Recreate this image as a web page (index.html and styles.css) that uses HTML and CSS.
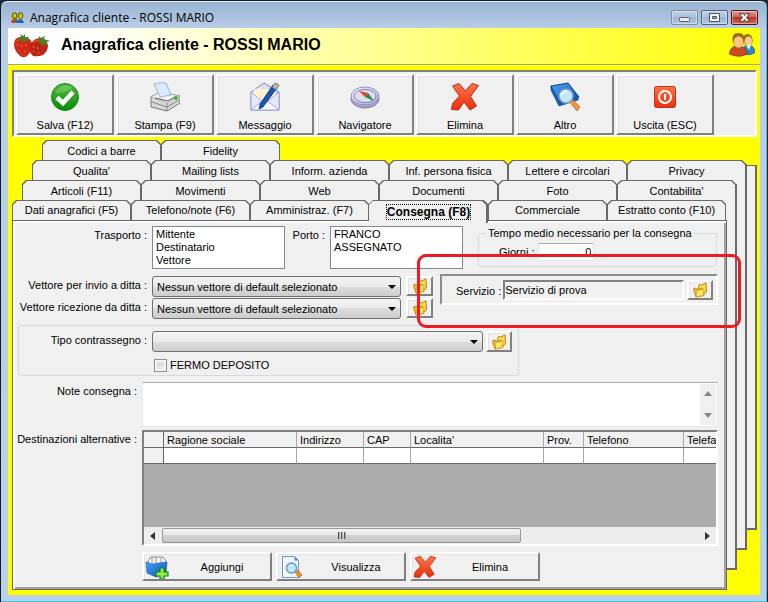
FILE: index.html
```html
<!DOCTYPE html>
<html lang="it">
<head>
    <meta charset="UTF-8">
    <meta name="viewport" content="width=device-width, initial-scale=1.0">
    <title>Anagrafica cliente - ROSSI MARIO</title>
    <link rel="stylesheet" href="styles.css">
</head>
<body>
    <!-- Shared icons -->
    <svg class="defs" aria-hidden="true">
        <defs>
            <linearGradient id="gRed" x1="0" y1="0" x2="0" y2="1"><stop offset="0" stop-color="#ff7448"/><stop offset="1" stop-color="#e8300c"/></linearGradient>
            <linearGradient id="gGreen" x1="0" y1="0" x2="0" y2="1"><stop offset="0" stop-color="#52bd3c"/><stop offset="1" stop-color="#078a08"/></linearGradient>
            <linearGradient id="gFolder" x1="0" y1="0" x2="1" y2="1"><stop offset="0" stop-color="#fffbb0"/><stop offset="1" stop-color="#f7d020"/></linearGradient>
            <linearGradient id="gLilac" x1="0" y1="0" x2="1" y2="1"><stop offset="0" stop-color="#f4f4ff"/><stop offset="1" stop-color="#a9abd8"/></linearGradient>
            <linearGradient id="gBlue" x1="0" y1="0" x2="1" y2="1"><stop offset="0" stop-color="#48a4f4"/><stop offset="1" stop-color="#0a4fae"/></linearGradient>
        </defs>
        <symbol id="icon-folder" viewBox="0 0 16 16">
            <path d="M6.500 4.500l1-2 2 .5 4.500-2 .5 9-2.500 2-5-1z" fill="#f7d84e" stroke="#b8860b"/>
            <path d="M1.500 7l2.500-1 1 1.500 5.500-1 1.500 7-8 1.500z" fill="#eec23a" stroke="#b8860b"/>
            <path d="M4.500 9l7.500-2-.5 6.500-7 1.500z" fill="url(#gFolder)" stroke="#cfa010" stroke-width=".7"/>
        </symbol>
        <symbol id="icon-delete" viewBox="0 0 30 30">
            <path d="M2.500 4l6.500-2.500 6.500 7.500L22 1.500l6.500 2-8 11 6 9.500-6.500 4-6-8-5.500 8-7-.5 1-6 7-7.500z" fill="url(#gRed)" stroke="#c42810"/>
        </symbol>
        <symbol id="icon-users" viewBox="0 0 26 24">
            <path d="M14 21c0-6 1-9 5-9s7 3 6.500 8q-5 3-11.500 1z" fill="#2d83d6" stroke="#18539c" stroke-width=".7"/>
            <path d="M17 12l3 5 2-5z" fill="#e8f6ff"/>
            <path d="M14.500 3q4-4 8 0 2 4 .5 8l-7 1z" fill="#9b7110"/>
            <ellipse cx="19.500" cy="8" rx="3.500" ry="4.500" fill="#fccb91"/>
            <path d="M.5 21C1 16 3 13 9 13s8.500 3 9 8q-8 4.500-17.500 0z" fill="#c94a1c" stroke="#8a2c0c" stroke-width=".7"/>
            <path d="M3.500 7Q3 0 9 0t6.500 5q0 4-1.500 7H5z" fill="#9b6b17"/>
            <ellipse cx="9.500" cy="9" rx="4.800" ry="5.800" fill="#fcc588"/>
        </symbol>
    </svg>

    <div class="window">
        <div class="titlebar">
            <svg class="title-icon" viewBox="0 0 13 12">
                <path d="M2 1h3l1 3-2 3-3-2zM8 1h3l1 3-2 4-3-3z" fill="#d9c400" stroke="#5c5400"/>
                <path d="M0 10q1-4 6-4v5H1z" fill="#e23418"/><path d="M5 11q0-4 4-3.500t4 3.500z" fill="#2465c8"/>
                <path d="M3 7h3v2H3z" fill="#2c9c28"/>
            </svg>
            <span class="title-text">Anagrafica cliente - ROSSI MARIO</span>
            <button class="win-btn" aria-label="Riduci"><svg viewBox="0 0 27 15"><rect x="8.500" y="7.500" width="10" height="4" rx="1" fill="#ebebeb" stroke="#5b5f68"/></svg></button>
            <button class="win-btn strong" aria-label="Ingrandisci"><svg viewBox="0 0 27 15"><path d="M8.500 3.500h10v8h-10zM11.500 6.500h4v2h-4z" fill="#f5f5f5" fill-rule="evenodd" stroke="#4b5260"/></svg></button>
            <button class="win-btn close" aria-label="Chiudi"><svg viewBox="0 0 27 15"><path d="M8.500 3.500h3.500l1.500 2 1.500-2h3.500l-3 4 3 4H15l-1.500-2-1.500 2H8.500l3-4z" fill="#f8f8f8" stroke="#54424a"/></svg></button>
        </div>

        <div class="header">
            <svg class="logo" viewBox="0 0 37 24">
                <path d="M1 10Q1 4 7 3q10-1 12 6 1 7-5 13-4 3-8-1-5-5-5-11z" fill="#cf2a16"/>
                <path d="M17 13q1-7 9-9 8 1 9 7 0 6-5 10-5 2-10 1-4-3-3-9z" fill="#bf2413"/>
                <path d="M20 9q3-3 6-3M3 8q2-3 5-3" fill="none" stroke="#ea5a3c"/>
                <path d="M5 4l3-1-1-3 3 2 2-2 0 3 4 0-2 2 2 2-4 0-2 2-1-3-4 1zM26 6l0-4 2 2 4-2-1 3 6 2-4 1 2 5-4-3-2 3-1-4-4-1z" fill="#517c28"/>
                <path d="M4 10l1 2m3-1l1 2m4-3l0 2m-7 4l1 1m4 0l1 1m-3 2l1 1m10-9l1 2m3-1l1 2m-5 2l1 1m5 0l-1 2" stroke="#f57c53"/>
            </svg>
            <h1>Anagrafica cliente - ROSSI MARIO</h1>
            <svg class="users"><use href="#icon-users"/></svg>
        </div>

        <div class="content">
            <div class="toolbar">
                <button class="tool">
                    <svg viewBox="0 0 30 30"><circle cx="15" cy="15" r="13.500" fill="url(#gGreen)" stroke="#16861a"/><path d="M6 9Q12 1 22 5q-4 6-16 6z" fill="#fff" opacity=".2"/><path d="M7 15.500l6 5.500L23 10" fill="none" stroke="#fff" stroke-width="4.500"/></svg>
                    Salva (F12)
                </button>
                <button class="tool">
                    <svg viewBox="0 0 30 30"><path d="M1 15l9-5 20 4v7l-13 8L1 25z" fill="#d7d7d7" stroke="#777"/><path d="M1 15l9-5 20 4-13 7z" fill="#f3f3f3" stroke="#999" stroke-width=".6"/><path d="M4 2q7-2 12-1l5 12-11 2z" fill="#d8ebff" stroke="#7f9dc0" stroke-width=".7"/><path d="M17 21v8M2 20l15 5 12-7" fill="none" stroke="#888"/><path d="M5 16l13 3 7-4" fill="none" stroke="#555"/><circle cx="26" cy="16" r="2" fill="#35b334"/></svg>
                    Stampa (F9)
                </button>
                <button class="tool">
                    <svg viewBox="0 0 30 30"><path d="M1 10L14 1l15 9v18H1z" fill="url(#gLilac)" stroke="#8588bd"/><path d="M4 7h22v12l-11 6-11-7z" fill="#fff0cf"/><path d="M1 10l12 10L1 28zM29 10L17 20l12 8z" fill="#e7e8fb" stroke="#9092c8" stroke-width=".7"/><path d="M1 28l14-11 14 11z" fill="#f5f5ff" stroke="#9092c8" stroke-width=".7"/><path d="M23 3l4 3-14 19-4 2 1-5z" fill="#1756b5" stroke="#0b2d6d" stroke-width=".7"/><path d="M25 1l4 2-3 5-4-3z" fill="#bcbcae" stroke="#555" stroke-width=".7"/></svg>
                    Messaggio
                </button>
                <button class="tool">
                    <svg viewBox="0 0 30 30"><ellipse cx="15" cy="17" rx="14" ry="9" fill="#a3a5d0" stroke="#7c7eac"/><ellipse cx="15" cy="14" rx="14" ry="9" fill="url(#gLilac)" stroke="#8f91c0"/><ellipse cx="15" cy="14" rx="11" ry="6.500" fill="#dcddef" stroke="#8082ac"/><path d="M9 9l9 2-3 4z" fill="#e6402a"/><path d="M18 11l6 8-9-4z" fill="#1f8c3c"/></svg>
                    Navigatore
                </button>
                <button class="tool">
                    <svg><use href="#icon-delete"/></svg>
                    Elimina
                </button>
                <button class="tool">
                    <svg viewBox="0 0 30 30"><path d="M1 4l17-3 11 14-19 8z" fill="url(#gBlue)" stroke="#0b3f8c"/><path d="M1 4v4l8 16 19-6v-3L10 21z" fill="#1565c6" stroke="#0b3f8c" stroke-width=".7"/><path d="M20 20l3-2 7 7-3 4z" fill="#f59a35" stroke="#b3622b" stroke-width=".8"/><circle cx="16" cy="14" r="7" fill="#c4e8fb" stroke="#7f9db5" stroke-width="1.500"/><path d="M11 13q2-4 6-4" stroke="#fff" stroke-width="2" fill="none"/></svg>
                    Altro
                </button>
                <button class="tool">
                    <svg viewBox="0 0 30 30"><rect x="4.500" y="4.500" width="21" height="21" rx="2" fill="url(#gRed)" stroke="#bf3514"/><circle cx="15" cy="15" r="6" fill="none" stroke="#fff" stroke-width="2"/><path d="M15 12v6" stroke="#fff" stroke-width="2"/></svg>
                    Uscita (ESC)
                </button>
            </div>

            <div class="tabs">
                <div class="sheet sheet-4"></div>
                <div class="sheet sheet-3"></div>
                <div class="sheet sheet-2"></div>

                <div class="tab-row row-1">
                    <button class="tab">Codici a barre</button>
                    <button class="tab">Fidelity</button>
                </div>
                <div class="tab-row row-2">
                    <button class="tab">Qualita'</button>
                    <button class="tab">Mailing lists</button>
                    <button class="tab">Inform. azienda</button>
                    <button class="tab">Inf. persona fisica</button>
                    <button class="tab">Lettere e circolari</button>
                    <button class="tab">Privacy</button>
                </div>
                <div class="tab-row row-3">
                    <button class="tab">Articoli (F11)</button>
                    <button class="tab">Movimenti</button>
                    <button class="tab">Web</button>
                    <button class="tab">Documenti</button>
                    <button class="tab">Foto</button>
                    <button class="tab">Contabilita'</button>
                </div>
                <div class="tab-row row-4">
                    <button class="tab">Dati anagrafici (F5)</button>
                    <button class="tab">Telefono/note (F6)</button>
                    <button class="tab">Amministraz. (F7)</button>
                    <button class="tab active"><span>Consegna (F8)</span></button>
                    <button class="tab">Commerciale</button>
                    <button class="tab">Estratto conto (F10)</button>
                </div>

                <div class="panel">
                    <div class="line">
                        <label class="field-label" for="trasporto">Trasporto :</label>
                        <select class="listbox" id="trasporto" size="3" multiple>
                            <option>Mittente</option>
                            <option>Destinatario</option>
                            <option>Vettore</option>
                        </select>
                        <label class="porto-label" for="porto">Porto :</label>
                        <select class="listbox" id="porto" size="3" multiple>
                            <option>FRANCO</option>
                            <option>ASSEGNATO</option>
                        </select>
                        <fieldset class="tempo">
                            <legend>Tempo medio necessario per la consegna</legend>
                            <label for="giorni">Giorni :</label>
                            <input type="text" id="giorni" value="0">
                        </fieldset>
                    </div>

                    <div class="line line-vettori">
                        <div class="vettori">
                            <div class="line">
                                <label class="field-label" for="invio">Vettore per invio a ditta :</label>
                                <div class="combo">
                                    <select id="invio"><option>Nessun vettore di default selezionato</option></select>
                                </div>
                                <button class="folder-btn" aria-label="Apri vettore invio"><svg><use href="#icon-folder"/></svg></button>
                            </div>
                            <div class="line">
                                <label class="field-label" for="ricezione">Vettore ricezione da ditta :</label>
                                <div class="combo">
                                    <select id="ricezione"><option>Nessun vettore di default selezionato</option></select>
                                </div>
                                <button class="folder-btn" aria-label="Apri vettore ricezione"><svg><use href="#icon-folder"/></svg></button>
                            </div>
                        </div>
                        <div class="servizio">
                            <label for="servizio">Servizio :</label>
                            <input type="text" id="servizio" value="Servizio di prova" readonly>
                            <button class="folder-btn" aria-label="Apri servizio"><svg><use href="#icon-folder"/></svg></button>
                            <div class="highlight"></div>
                        </div>
                    </div>

                    <div class="group">
                        <div class="line">
                            <label class="field-label" for="contrassegno">Tipo contrassegno :</label>
                            <div class="combo">
                                <select id="contrassegno"><option></option></select>
                            </div>
                            <button class="folder-btn" aria-label="Apri contrassegno"><svg><use href="#icon-folder"/></svg></button>
                        </div>
                        <label class="check"><input type="checkbox">FERMO DEPOSITO</label>
                    </div>

                    <div class="line line-note">
                        <label class="side-label" for="note">Note consegna :</label>
                        <div class="memo">
                            <textarea id="note"></textarea>
                            <div class="vscroll">
                                <svg viewBox="0 0 8 5"><path d="M0 5l4-5 4 5z" fill="#888"/></svg>
                                <svg viewBox="0 0 8 5"><path d="M0 0l4 5 4-5z" fill="#888"/></svg>
                            </div>
                        </div>
                    </div>

                    <div class="line line-grid">
                        <span class="side-label">Destinazioni alternative :</span>
                        <div class="grid">
                            <div class="grid-view">
                                <table>
                                    <colgroup>
                                        <col class="c-sel"><col class="c-wide"><col class="c-ind"><col class="c-cap"><col class="c-wide"><col class="c-prov"><col class="c-tel"><col class="c-tel">
                                    </colgroup>
                                    <thead>
                                        <tr><th></th><th>Ragione sociale</th><th>Indirizzo</th><th>CAP</th><th>Localita'</th><th>Prov.</th><th>Telefono</th><th>Telefa</th></tr>
                                    </thead>
                                    <tbody>
                                        <tr><th></th><td></td><td></td><td></td><td></td><td></td><td></td><td></td></tr>
                                    </tbody>
                                </table>
                            </div>
                            <div class="hscroll">
                                <svg viewBox="0 0 5 8"><path d="M5 0L0 4l5 4z" fill="#333"/></svg>
                                <div class="track"><div class="thumb"><i></i><i></i><i></i></div></div>
                                <svg viewBox="0 0 5 8"><path d="M0 0l5 4-5 4z" fill="#333"/></svg>
                            </div>
                        </div>
                    </div>

                    <div class="actions">
                        <button class="action">
                            <svg viewBox="0 0 24 24"><path d="M3 6l3-4h12l3 4v4H3z" fill="#f3f3f3" stroke="#888"/><path d="M7 3v5m4-6v6m5-5v5" stroke="#999"/><path d="M1 7l6 2 15-2-1 11-10 4-9-4z" fill="url(#gBlue)" stroke="#1562bd" stroke-width=".7"/><path d="M15 13h4v4h4v4h-4v3h-4v-3h-4v-4h4z" fill="#8ff04a" stroke="#148018" stroke-width="1.200"/></svg>
                            <span>Aggiungi</span>
                        </button>
                        <button class="action">
                            <svg viewBox="0 0 24 24"><path d="M3.500 1.500h12l4 4v17h-16z" fill="#edf5fe" stroke="#7396c4"/><path d="M15.500 1.500v4h4z" fill="#5784bd"/><path d="M16 17l3-2 4 5-3 3z" fill="#f28b2c" stroke="#a5552d" stroke-width=".6"/><circle cx="12.500" cy="13" r="5" fill="#c2e9fa" stroke="#6898bd" stroke-width="1.400"/></svg>
                            <span>Visualizza</span>
                        </button>
                        <button class="action">
                            <svg><use href="#icon-delete"/></svg>
                            <span>Elimina</span>
                        </button>
                    </div>
                </div>
            </div>
        </div>
    </div>
</body>
</html>
```
FILE: styles.css
```css
* {
    margin: 0;
    padding: 0;
    box-sizing: border-box;
}

body {
    background: #1c2c38;
    color: #000;
    font-family: 'Liberation Sans', Arial, sans-serif;
    font-size: 11px;
    line-height: 14px;
}

button, input, select, textarea {
    font: inherit;
    color: inherit;
}

svg {
    display: block;
    flex-shrink: 0;
}

.defs {
    position: absolute;
    width: 0;
    height: 0;
}

/* Window frame */
.window {
    min-height: 100vh;
    border: 1px solid #111a20;
    border-radius: 7px 7px 0 0;
    padding: 0 7px 7px;
    background: linear-gradient(#98b2d0, #b9cee8 28px, #b9d1ea);
    box-shadow: inset -1px -1px 0 #2fc8e8, inset 0 1px 0 #e4eef8;
    display: flex;
    flex-direction: column;
}

.titlebar {
    height: 27px;
    display: flex;
    align-items: center;
    gap: 3px;
    padding: 6px 2px 0 3px;
}

.title-icon {
    width: 13px;
    height: 12px;
}

.title-text {
    flex: 1;
    padding-left: 3px;
    font-family: 'Open Sans', sans-serif;
    font-size: 12px;
}

.win-btn {
    width: 27px;
    height: 15px;
    border: 1px solid #7990ab;
    border-radius: 2px;
    background: linear-gradient(#bfd0e4, #aac0da 50%, #9db6d3 50%, #b0c6df);
    box-shadow: inset 0 0 0 1px rgba(255, 255, 255, 0.4);
}

.win-btn svg {
    width: 27px;
    height: 15px;
    margin: -1px;
}

.win-btn.strong {
    border-color: #4d617c;
}

.win-btn.close {
    border-color: #541520;
    background: linear-gradient(#dd9c92, #c86052 50%, #b23524 50%, #cf6a50);
}

.header {
    height: 37px;
    display: flex;
    align-items: center;
    padding: 0 5px;
    border-bottom: 1px solid #a0a0a0;
    background: linear-gradient(90deg, #fff 10%, #ffff20 90%, #ff0);
}

.logo {
    width: 37px;
    height: 24px;
}

h1 {
    flex: 1;
    padding: 0 0 3px 11px;
    font-size: 16px;
    line-height: 20px;
}

.users {
    width: 26px;
    height: 24px;
    margin-bottom: 3px;
}

.content {
    flex: 1;
    padding: 5px 3px 5px 4px;
    background: #ff0;
}

/* Toolbar */
.toolbar {
    display: flex;
    gap: 2px;
    padding: 2px 2px 0;
    border: 2px solid;
    border-color: #808080 #fff #fff #808080;
    background: #f0f0f0;
}

.tool {
    width: 98px;
    height: 61px;
    padding: 6px 0 1px;
    display: flex;
    flex-direction: column;
    align-items: center;
    justify-content: space-between;
}

.tool svg {
    width: 30px;
    height: 30px;
}

.tool, .action, .folder-btn {
    border: 2px solid;
    border-color: #fff #808080 #808080 #fff;
    background: #f0f0f0;
    box-shadow: inset 1px 1px 0 #e3e3e3;
}

/* Tabs */
.tabs {
    position: relative;
    margin-top: 3px;
    padding-right: 30px;
}

/* Pages of the rows behind the current one */
.sheet {
    position: absolute;
    width: 60px;
    border: solid #696969;
    border-width: 1px 2px 2px 0;
    background: #f0f0f0;
}

.sheet-4 {
    top: 25px;
    right: 0;
    bottom: 60px;
}

.sheet-3 {
    top: 24px;
    right: 10px;
    bottom: 40px;
}

.sheet-2 {
    top: 44px;
    right: 20px;
    bottom: 20px;
}

.tab-row {
    position: relative;
    display: grid;
    grid-template-columns: repeat(6, 1fr);
    height: 20px;
    margin-right: -30px;
}

.row-1 {
    padding: 0 1px 0 30px;
}

.row-2 {
    padding: 0 11px 0 20px;
}

.row-3 {
    padding: 0 21px 0 10px;
}

.row-4 {
    z-index: 2;
    padding: 0 31px 0 0;
}

.tab {
    position: relative;
    z-index: 0;
    height: 24px;
    padding-bottom: 2px;
    border: 0;
    background: #696969;
    white-space: nowrap;
    clip-path: polygon(0 4px, 4px 0, calc(100% - 4px) 0, 100% 4px, 100% 100%, 0 100%);
}

.tab::before {
    content: '';
    position: absolute;
    inset: 1px 1px 0;
    z-index: -1;
    background: #f0f0f0;
    clip-path: polygon(0 4px, 4px 0, calc(100% - 4px) 0, 100% 4px, 100% 100%, 0 100%);
}

.row-4 .tab {
    height: 20px;
    padding-bottom: 0;
}

.row-4 .tab.active {
    height: 23px;
    font-size: 12px;
    font-weight: bold;
}

.tab.active::before {
    inset: 1px 2px 0 0;
}

.tab.active span {
    outline: 1px dotted #000;
}

.panel {
    position: relative;
    border: 1px solid #696969;
    padding: 5px 8px 8px 5px;
    background: #f0f0f0;
    box-shadow: inset 2px 2px 0 #fff, inset -2px -2px 0 #a0a0a0;
}

/* Form */
.line {
    display: flex;
}

.line label {
    white-space: nowrap;
}

.field-label {
    width: 129px;
    margin-right: 5px;
    padding-top: 2px;
    text-align: right;
}

.listbox {
    width: 133px;
    height: 43px;
    padding: 1px 0;
    border: 1px solid #828790;
    border-radius: 0;
    background: #fff;
    overflow: hidden;
}

.listbox option {
    min-height: 13px;
    height: 13px;
    padding: 0 3px;
    line-height: 13px;
}

.porto-label {
    width: 40px;
    margin-right: 5px;
    padding-top: 2px;
    text-align: right;
}

.tempo {
    flex: 1;
    height: 41px;
    margin: 0 1px 0 15px;
    padding: 3px 0 0 20px;
    display: flex;
    align-items: flex-start;
    gap: 4px;
    border: 1px solid #d0dbe3;
    border-radius: 3px;
}

.tempo legend {
    margin-left: -13px;
    padding: 0 2px;
    white-space: nowrap;
}

.tempo label {
    padding-top: 2px;
}

.tempo input {
    width: 56px;
    height: 18px;
    padding-right: 2px;
    border: 1px solid #e2e9ef;
    border-top-color: #abadb3;
    background: #fff;
    text-align: right;
}

.line-vettori {
    margin-top: 5px;
    gap: 7px;
}

.vettori {
    padding-top: 2px;
    display: flex;
    flex-direction: column;
    gap: 1px;
}

.combo {
    position: relative;
    width: 249px;
    margin-right: 5px;
}

.combo select {
    display: block;
    width: 100%;
    height: 21px;
    padding: 0 20px 0 4px;
    appearance: none;
    border: 1px solid #707070;
    border-radius: 3px;
    background: linear-gradient(#f3f3f3, #ebebeb 50%, #dddddd 50%, #cdcdcd);
}

.combo::after {
    content: '';
    position: absolute;
    top: 9px;
    right: 5px;
    border: 4px solid transparent;
    border-top-color: #000;
    border-bottom: 0;
}

.folder-btn {
    width: 27px;
    height: 20px;
    display: flex;
    align-items: center;
    justify-content: center;
}

.folder-btn svg {
    width: 16px;
    height: 16px;
}

.servizio {
    position: relative;
    flex: 1;
    height: 31px;
    padding: 4px 3px 0 14px;
    display: flex;
    border: 2px solid;
    border-color: #8c8c8c #fff #fff #8c8c8c;
}

.servizio label {
    padding-top: 4px;
    margin-right: 2px;
}

.servizio input {
    flex: 1;
    min-width: 0;
    height: 20px;
    margin-right: 3px;
    border: 2px solid;
    border-color: #808080 #fff #fff #808080;
    background: #f0f0f0;
}

.servizio .folder-btn {
    width: 26px;
}

/* Red marker around the service field */
.highlight {
    position: absolute;
    inset: -22px -25px -25px;
    border: 3px solid #ed1c24;
    border-radius: 9px;
    pointer-events: none;
}

.group {
    width: 501px;
    height: 51px;
    margin-top: 6px;
    padding-top: 5px;
    border: 1px solid #d0dbe3;
    border-radius: 3px;
}

.group .field-label {
    width: 128px;
}

.group .combo {
    width: 331px;
    margin-right: 3px;
}

.group .folder-btn {
    width: 26px;
    height: 21px;
}

.check {
    display: flex;
    align-items: center;
    gap: 3px;
    margin: 6px 0 0 135px;
}

.check input {
    width: 13px;
    height: 13px;
    appearance: none;
    border: 1px solid #8e8f8f;
    background: linear-gradient(135deg, #cbcfd5, #f6f6f6);
    box-shadow: inset 0 0 0 2px #f4f4f4;
}

.side-label {
    width: 119px;
    margin-right: 5px;
    padding-top: 2px;
    display: flex;
    justify-content: flex-end;
    white-space: nowrap;
}

.line-note {
    margin-top: 6px;
}

.memo {
    flex: 1;
    display: flex;
    height: 45px;
    padding: 1px;
    border: 1px solid #e2e9ef;
    border-top-color: #abadb3;
    background: #fff;
}

.memo textarea {
    flex: 1;
    border: 0;
    resize: none;
    background: #fff;
}

.vscroll {
    width: 16px;
    padding: 7px 4px;
    display: flex;
    flex-direction: column;
    justify-content: space-between;
    background: #f0f0f0;
}

.vscroll svg {
    width: 8px;
    height: 5px;
}

.line-grid {
    margin-top: 3px;
}

.grid {
    flex: 1;
    min-width: 0;
    height: 116px;
    display: flex;
    flex-direction: column;
    border: 2px solid;
    border-color: #808080 #fff #fff #808080;
    background: #ababab;
}

.grid-view {
    flex: 1;
    overflow: hidden;
}

table {
    width: 640px;
    table-layout: fixed;
    border-collapse: separate;
    border-spacing: 0;
    background: #fff;
}

th, td {
    height: 16px;
    padding: 0 3px;
    border-right: 1px solid #a8a8a8;
    border-bottom: 1px solid #696969;
    line-height: 14px;
    font-weight: normal;
    text-align: left;
}

th {
    background: #f0f0f0;
}

th:first-child {
    border-right-color: #696969;
}

.c-sel {
    width: 20px;
}

.c-wide {
    width: 133px;
}

.c-ind {
    width: 67px;
}

.c-cap {
    width: 47px;
}

.c-prov {
    width: 40px;
}

.c-tel {
    width: 100px;
}

.hscroll {
    height: 17px;
    display: flex;
    align-items: center;
    gap: 7px;
    padding: 0 6px;
    background: #ededed;
}

.hscroll svg {
    width: 5px;
    height: 8px;
}

.track {
    flex: 1;
}

.thumb {
    width: 67%;
    height: 15px;
    display: flex;
    align-items: center;
    justify-content: center;
    gap: 1px;
    border: 1px solid #979797;
    border-radius: 2px;
    background: linear-gradient(#f4f4f4, #e6e6e6 50%, #d2d2d2 50%, #c6c6c6);
}

.thumb i {
    width: 2px;
    height: 7px;
    border-left: 1px solid #555;
    background: #aaa;
}

.actions {
    display: flex;
    gap: 4px;
    margin: 6px 0 0 124px;
}

.action {
    width: 130px;
    height: 29px;
    padding: 0 1px;
    display: flex;
    align-items: center;
}

.action svg {
    width: 24px;
    height: 24px;
}

.action span {
    flex: 1;
    padding-left: 6px;
    text-align: center;
}
```
